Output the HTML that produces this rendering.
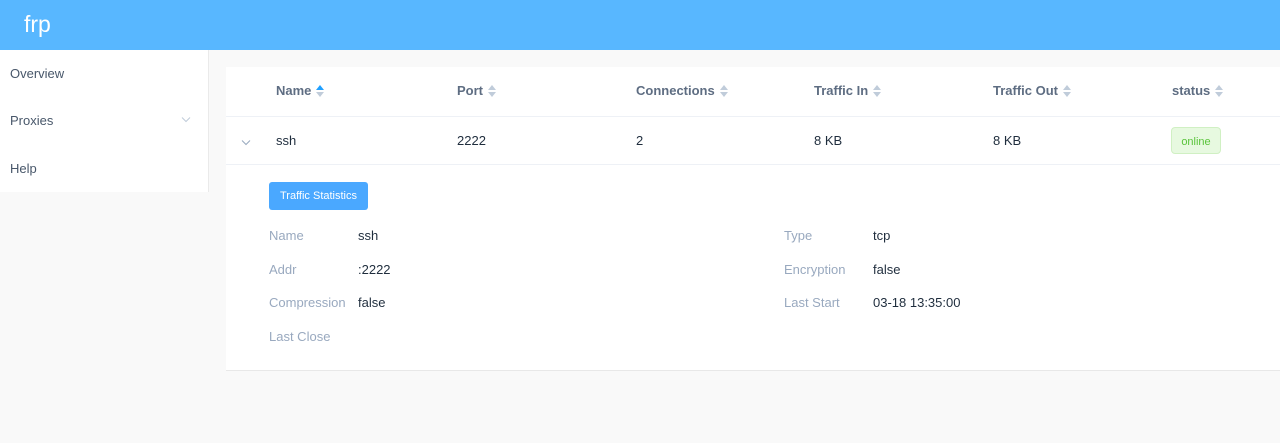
<!DOCTYPE html>
<html><head><meta charset="utf-8"><style>
*{margin:0;padding:0;box-sizing:border-box}
body{width:1280px;height:443px;background:#f9f9f9;font-family:"Liberation Sans",sans-serif;position:relative;overflow:hidden;color:#48576a}
.a{position:absolute;white-space:nowrap}
.hdr{left:0;top:0;width:1280px;height:50px;background:#58b7ff}
.logo{left:24px;top:11px;font-size:23px;color:#fff}
.side{left:0;top:50px;width:209px;height:142px;background:#fff;border-right:1px solid #eaeaea}
.mi{font-size:13px;color:#48576a;left:10px}
.card{left:226px;top:67px;width:1054px;height:304px;background:#fff;border-bottom:1px solid #e8e8e8}
.th{font-size:13px;font-weight:bold;color:#5e6d82;top:83px}
.td{font-size:13px;color:#1f2d3d;top:133px}
.line{height:1px;background:#eef1f6;left:226px;width:1054px}
.lbl{font-size:13px;color:#99a9bf}
.val{font-size:13px;color:#1f2d3d}
.sort{display:inline-block;vertical-align:middle;margin-left:5px;width:8px;height:12px;position:relative;top:-1px}
.sort:before,.sort:after{content:"";position:absolute;left:0;border-left:4px solid transparent;border-right:4px solid transparent}
.sort:before{top:0;border-bottom:5px solid #c0ccda}
.sort:after{bottom:0;border-top:5px solid #c0ccda}
.sort.up:before{border-bottom-color:#20a0ff}
</style></head><body>
<div class="a hdr"></div>
<div class="a logo">frp</div>
<div class="a side"></div>
<div class="a mi" style="top:66px">Overview</div>
<div class="a mi" style="top:113px">Proxies</div>
<svg class="a" style="left:181px;top:116px" width="10" height="7" viewBox="0 0 10 7"><path d="M1 1.5L5 5.5L9 1.5" fill="none" stroke="#bfcbd9" stroke-width="1"/></svg>
<div class="a mi" style="top:161px">Help</div>

<div class="a card"></div>
<div class="a line" style="top:116px"></div>
<div class="a line" style="top:164px"></div>

<div class="a th" style="left:276px">Name<span class="sort up"></span></div>
<div class="a th" style="left:457px">Port<span class="sort"></span></div>
<div class="a th" style="left:636px">Connections<span class="sort"></span></div>
<div class="a th" style="left:814px">Traffic In<span class="sort"></span></div>
<div class="a th" style="left:993px">Traffic Out<span class="sort"></span></div>
<div class="a th" style="left:1172px">status<span class="sort"></span></div>

<svg class="a" style="left:241px;top:139px" width="10" height="7" viewBox="0 0 10 7"><path d="M1 1.5L5 5.5L9 1.5" fill="none" stroke="#97a8be" stroke-width="1"/></svg>
<div class="a td" style="left:276px">ssh</div>
<div class="a td" style="left:457px">2222</div>
<div class="a td" style="left:636px">2</div>
<div class="a td" style="left:814px">8 KB</div>
<div class="a td" style="left:993px">8 KB</div>
<div class="a" style="left:1171px;top:127px;width:50px;height:27px;background:#e7f9e0;border:1px solid #d0f0c3;border-radius:4px;color:#5bc43c;font-size:11px;line-height:29px;text-align:center">online</div>

<div class="a" style="left:269px;top:182px;width:99px;height:28px;background:#4aa8ff;border-radius:3px;color:#fff;font-size:11px;line-height:28px;text-align:center">Traffic Statistics</div>

<div class="a lbl" style="left:269px;top:228px">Name</div>
<div class="a val" style="left:358px;top:228px">ssh</div>
<div class="a lbl" style="left:269px;top:262px">Addr</div>
<div class="a val" style="left:358px;top:262px">:2222</div>
<div class="a lbl" style="left:269px;top:295px">Compression</div>
<div class="a val" style="left:358px;top:295px">false</div>
<div class="a lbl" style="left:269px;top:329px">Last Close</div>
<div class="a lbl" style="left:784px;top:228px">Type</div>
<div class="a val" style="left:873px;top:228px">tcp</div>
<div class="a lbl" style="left:784px;top:262px">Encryption</div>
<div class="a val" style="left:873px;top:262px">false</div>
<div class="a lbl" style="left:784px;top:295px">Last Start</div>
<div class="a val" style="left:873px;top:295px">03-18 13:35:00</div>
</body></html>
